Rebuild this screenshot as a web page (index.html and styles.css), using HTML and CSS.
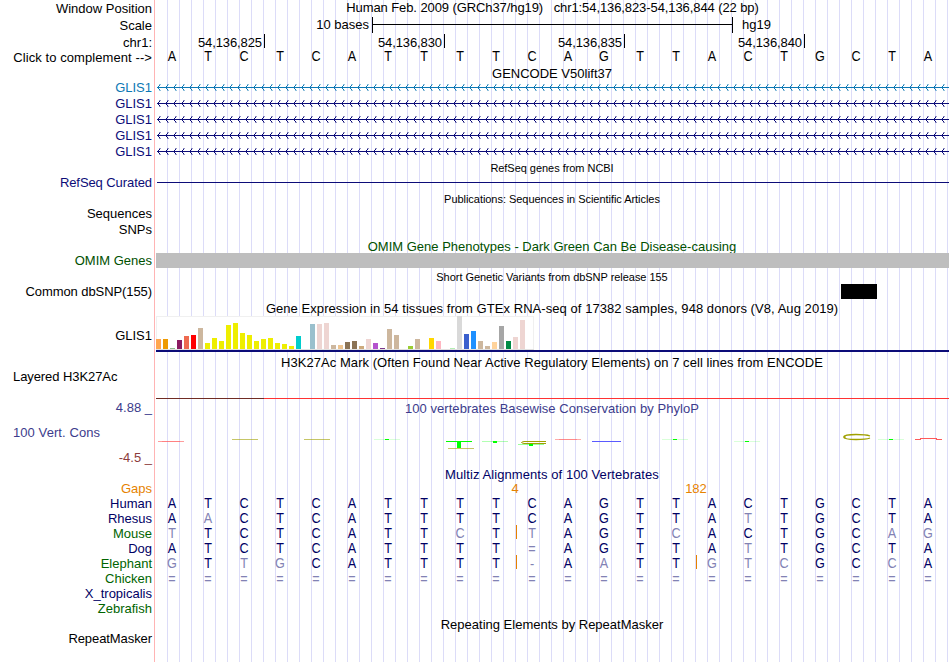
FILE: index.html
```html
<!DOCTYPE html>
<html lang="en">
<head>
	<meta charset="UTF-8">
	<title>Human chr1:54,136,823-54,136,844</title>
	<link rel="stylesheet" href="styles.css">
</head>
<body>
	<div class="browser">
		<div class="row h17">
			<div class="label">Window Position</div>
			<div class="data position">Human Feb. 2009 (GRCh37/hg19) &nbsp; chr1:54,136,823-54,136,844 (22 bp)</div>
		</div>
		<div class="row h17">
			<div class="label">Scale</div>
			<div class="data scale">
				<span class="scale_size">10 bases</span>
				<span class="scale_bar"></span>
				<span class="scale_db">hg19</span>
			</div>
		</div>
		<div class="row h15">
			<div class="label">chr1:</div>
			<div class="data coords">
				<span class="coord first">54,136,825</span>
				<span class="coord">54,136,830</span>
				<span class="coord">54,136,835</span>
				<span class="coord">54,136,840</span>
			</div>
		</div>
		<div class="row h15">
			<div class="label wide">Click to complement --&gt;</div>
			<div class="data bases" data-seq="ATCTCATTTTCAGTTACTGCTA"></div>
		</div>

		<div class="row h15"><div class="label"></div><div class="data title">GENCODE V50lift37</div></div>
		<div class="row h16 blue"><div class="label">GLIS1</div><div class="data gene"></div></div>
		<div class="row h16 navy"><div class="label">GLIS1</div><div class="data gene"></div></div>
		<div class="row h16 navy"><div class="label">GLIS1</div><div class="data gene"></div></div>
		<div class="row h16 navy"><div class="label">GLIS1</div><div class="data gene"></div></div>
		<div class="row h16 navy"><div class="label">GLIS1</div><div class="data gene"></div></div>

		<div class="row h15"><div class="label"></div><div class="data title small">RefSeq genes from NCBI</div></div>
		<div class="row h16 navy">
			<div class="label tight">RefSeq Curated</div>
			<div class="data"><div class="refseq_line"></div></div>
		</div>

		<div class="row h15"><div class="label"></div><div class="data title small">Publications: Sequences in Scientific Articles</div></div>
		<div class="row h16"><div class="label">Sequences</div></div>
		<div class="row h16"><div class="label">SNPs</div></div>

		<div class="row h15 green"><div class="label"></div><div class="data title omim_title">OMIM Gene Phenotypes - Dark Green Can Be Disease-causing</div></div>
		<div class="row h16 green">
			<div class="label">OMIM Genes</div>
			<div class="data"><div class="omim_bar"></div></div>
		</div>

		<div class="row h15"><div class="label"></div><div class="data title small">Short Genetic Variants from dbSNP release 155</div></div>
		<div class="row h16">
			<div class="label tight">Common dbSNP(155)</div>
			<div class="data"><div class="snp"></div></div>
		</div>

		<div class="row h15"><div class="label"></div><div class="data title gtex_title">Gene Expression in 54 tissues from GTEx RNA-seq of 17382 samples, 948 donors (V8, Aug 2019)</div></div>
		<div class="row h38">
			<div class="label gtex_label">GLIS1</div>
			<div class="data gtex">
				<div class="gtex_box" id="gtex"></div>
			</div>
		</div>

		<div class="row h16"><div class="label"></div><div class="data title h3k_title">H3K27Ac Mark (Often Found Near Active Regulatory Elements) on 7 cell lines from ENCODE</div></div>
		<div class="row h31">
			<div class="label left tight">Layered H3K27Ac</div>
			<div class="data h3k"></div>
		</div>

		<div class="row h15 slate"><div class="label">4.88 _</div><div class="data title phylop_title">100 vertebrates Basewise Conservation by PhyloP</div></div>
		<div class="row h51 slate">
			<div class="label cons">
				<span class="cons_name">100 Vert. Cons</span>
				<span class="cons_min">-4.5 _</span>
			</div>
			<div class="data">
				<svg class="phylop" width="793" height="51" viewBox="156 414 793 51">
					<!-- flattened letters, one per base -->
					<g fill="#ff5a5a">
						<rect x="158" y="441" width="26" height="1" opacity=".6"/>
						<rect x="162" y="441" width="18" height="1" opacity=".4"/>
						<rect x="555" y="439" width="26" height="1" opacity=".5"/>
						<rect x="559" y="439" width="18" height="1" opacity=".4"/>
						<rect x="915" y="439" width="6" height="1"/>
						<rect x="920" y="438" width="17" height="1"/>
						<rect x="936" y="439" width="6" height="1"/>
					</g>
					<g fill="#a0a000">
						<rect x="232" y="439" width="26" height="1" opacity=".6"/>
						<rect x="304" y="439" width="26" height="1" opacity=".6"/>
						<rect x="448" y="448" width="26" height="1" opacity=".6"/>
					</g>
					<g fill="none" stroke="#a0a000">
						<path d="M546 441.5H524Q519 442.5 524 443.5H546" stroke-width="1"/>
						<path d="M870 436Q866 434.5 856 434.5Q844 434.5 844 437Q844 439.5 856 439.5Q866 439.5 870 438" stroke-width="1.3"/>
						<path d="M844.5 435.8V438.2" stroke-width="2"/>
					</g>
					<g fill="#00ff00">
						<rect x="374" y="439" width="26" height="1" opacity=".15"/>
						<rect x="385" y="439" width="4" height="1"/>
						<rect x="446" y="441" width="26" height="1"/>
						<rect x="457" y="441" width="4" height="7"/>
						<rect x="482" y="441" width="26" height="1" opacity=".3"/>
						<rect x="493" y="441" width="4" height="2"/>
						<rect x="518" y="444" width="26" height="1" opacity=".4"/>
						<rect x="529" y="444" width="4" height="2"/>
						<rect x="662" y="439" width="26" height="1" opacity=".15"/>
						<rect x="673" y="439" width="4" height="1"/>
						<rect x="734" y="441" width="26" height="1" opacity=".15"/>
						<rect x="745" y="441" width="4" height="1"/>
						<rect x="878" y="439" width="26" height="1" opacity=".15"/>
						<rect x="889" y="439" width="4" height="1"/>
					</g>
					<rect x="592" y="441" width="29" height="1" fill="#5a5aff"/>
				</svg>
			</div>
		</div>

		<div class="row h15 align"><div class="label"></div><div class="data title multiz_title">Multiz Alignments of 100 Vertebrates</div></div>
		<div class="row h15 orange">
			<div class="label">Gaps</div>
			<div class="data gaps"><span class="gap gap4">4</span><span class="gap gap182">182</span></div>
		</div>
		<!-- lower case = base differs from human, | = insert before the next base -->
		<div class="row h15 align"><div class="label">Human</div><div class="data bases low" data-seq="ATCTCATTTTCAGTTACTGCTA"></div></div>
		<div class="row h15 align"><div class="label">Rhesus</div><div class="data bases low" data-seq="AaCTCATTTTCAGTTAtTGCTA"></div></div>
		<div class="row h15 align"><div class="label green">Mouse</div><div class="data bases low" data-seq="tTCTCATTcT|tAGTcACTGCag"></div></div>
		<div class="row h15 align"><div class="label">Dog</div><div class="data bases low" data-seq="ATCTCATTTT=AGTTAtTGCTA"></div></div>
		<div class="row h15 align"><div class="label green">Elephant</div><div class="data bases low" data-seq="gTtgCATTTT|-AaTT|gtcGCcA"></div></div>
		<div class="row h15 align"><div class="label green">Chicken</div><div class="data bases low" data-seq="======================"></div></div>
		<div class="row h15 align"><div class="label">X_tropicalis</div></div>
		<div class="row h15 align"><div class="label green">Zebrafish</div></div>

		<div class="row h15"><div class="label"></div><div class="data title repeat_title">Repeating Elements by RepeatMasker</div></div>
		<div class="row h32"><div class="label tight">RepeatMasker</div></div>
	</div>
<script>
window.onload = function (){
	var rows = document.querySelectorAll('.bases');
	for (var i = 0; i < rows.length; i++) {
		var seq = rows[i].getAttribute('data-seq');
		var html = '';
		var cls = '';
		for (var j = 0; j < seq.length; j++) {
			var c = seq[j];
			if (c == '|') {
				cls = ' insert';
				continue;
			}
			var up = c.toUpperCase();
			if (c == '=' || c == '-') {
				cls += ' diff missing';
			} else if (c != up) {
				cls += ' diff';
			}
			html += '<span class="base' + cls + '"><span class="letter">' + up + '</span></span>';
			cls = '';
		}
		rows[i].innerHTML = html;
	}

	// introns: line with strand arrows every 8px, the arrow ends are fainter
	var genes = document.querySelectorAll('.gene');
	var d = '';
	var ends = '';
	for (var x = 1; x < 790; x += 8) {
		d += 'M' + (x + 1) + ' 7h1v1h-1zm0 2h1v1h-1zm1 -3h1v1h-1zm0 4h1v1h-1z';
		ends += 'M' + (x + 2) + ' 5h1v1h-1zm0 6h1v1h-1zm1 -6h1v1h-1zm0 6h1v1h-1z';
	}
	for (var i = 0; i < genes.length; i++) {
		genes[i].innerHTML = '<svg class="intron" width="793" height="16"><rect x="1" y="8" width="792" height="1"/><path d="' + d + '"/><path class="ends" d="' + ends + '"/></svg>';
	}

	// GTEx tissues: [height, colour]
	var tissues = [
		[10,'#ffa54f'],[10,'#ee9a00'],[1,'#8fbc8f'],[9,'#8b1c62'],[13,'#ee6a50'],[14,'#ff0000'],
		[21,'#cdb79e'],[6,'#eeee00'],[11,'#eeee00'],[8,'#eeee00'],[24,'#eeee00'],[26,'#eeee00'],
		[16,'#eeee00'],[14,'#eeee00'],[8,'#eeee00'],[10,'#eeee00'],[11,'#eeee00'],[6,'#eeee00'],
		[5,'#eeee00'],[3,'#eeee00'],[13,'#00cdcd'],[0,'#ee82ee'],[25,'#9ac0cd'],[25,'#eed5d2'],
		[26,'#eed5d2'],[4,'#cdb79e'],[4,'#eec591'],[7,'#8b7355'],[8,'#8b7355'],[3,'#cdaa7d'],
		[10,'#eed5d2'],[6,'#b452cd'],[1,'#7a378b'],[20,'#cdb79e'],[14,'#cdb79e'],[0,'#cdb79e'],
		[3,'#9acd32'],[10,'#cdb79e'],[0,'#7a67ee'],[11,'#ffd700'],[8,'#ffb6c1'],[0,'#cd9b1d'],
		[1,'#b4eeb4'],[33,'#d9d9d9'],[15,'#3a5fcd'],[18,'#1e90ff'],[8,'#cdb79e'],[3,'#cdb79e'],
		[7,'#ffd39b'],[23,'#a6a6a6'],[8,'#008b45'],[12,'#eed5d2'],[29,'#eed5d2'],[0,'#ff00ff']];
	var bars = '';
	for (var i = 0; i < tissues.length; i++) {
		bars += '<span class="tissue" style="height:' + tissues[i][0] + 'px;background:' + tissues[i][1] + '"></span>';
	}
	document.getElementById('gtex').innerHTML = bars;
}
</script>
</body>
</html>
```
FILE: styles.css
```css
body{
	margin: 0;
	background: #fff;
	font-family: "Liberation Sans", Arial, sans-serif;
	font-size: 13px;
	line-height: 15px;
	color: #000;
}
.browser{
	width: 949px;
	height: 662px;
	overflow: hidden;
	background: repeating-linear-gradient(to right, transparent 0, transparent 11px, #dcdcf8 11px, #dcdcf8 12px) 156px 0 no-repeat;
}
.row{
	display: flex;
}
.h15{ height: 15px; }
.h16{ height: 16px; }
.h17{ height: 17px; }
.h31{ height: 31px; }
.h32{ height: 32px; }
.h38{ height: 38px; }
.h51{ height: 51px; }

.blue{ color: #0c78b4; }
.navy{ color: #0c0c78; }
.green{ color: #005000; }
.slate{ color: #3c3c8c; }
.align{ color: #000064; }
.orange{ color: #e68200; }
.label.green{ color: #006400; }

.label{
	box-sizing: border-box;
	flex: none;
	width: 155px;
	padding: 1px 2px 0 13px;
	border-right: 1px solid #ffb4b4;
	text-align: right;
	white-space: nowrap;
}
.label.left{
	text-align: left;
}
.label.tight{
	letter-spacing: -0.08px;
}
.label.wide{
	padding-left: 0;
	letter-spacing: 0.08px;
}
.data{
	box-sizing: border-box;
	flex: none;
	width: 793px;
	margin-left: 1px;
	white-space: nowrap;
}
.position{
	text-align: center;
	letter-spacing: -0.09px;
}
.title{
	padding: 2px 1px 0 0;
	text-align: center;
}
.small{
	font-size: 11px;
	letter-spacing: -0.04px;
}
.gtex_title{
	letter-spacing: 0.055px;
}
.h3k_title{
	padding-top: 3px;
	letter-spacing: 0.05px;
}
.phylop_title{
	letter-spacing: 0.04px;
}
.multiz_title{
	letter-spacing: 0.08px;
}

.scale{
	display: flex;
}
.scale_size{
	width: 213px;
	text-align: right;
}
.scale_bar{
	box-sizing: border-box;
	width: 361px;
	height: 16px;
	margin: 0 9px 0 3px;
	border: solid #000;
	border-width: 0 1px;
	background: linear-gradient(#000, #000) 0 7px / 100% 1px no-repeat;
}
.coords{
	display: flex;
}
.coord{
	box-sizing: border-box;
	width: 180px;
	height: 14px;
	padding: 1px 2px 0 0;
	border-right: 1px solid #000;
	text-align: right;
	letter-spacing: -0.1px;
}
.coord.first{
	width: 109px;
}

.bases{
	display: flex;
	margin-left: -1px;
}
.base{
	position: relative;
	flex: none;
	width: 36px;
	text-align: center;
}
.letter{
	display: block;
	font-size: 14px;
	transform: scaleX(0.9);
}
.low{
	padding-top: 1px;
}
.diff{
	color: #8282b4;
}
.missing .letter{
	padding-top: 1px;
}
/* orange tick between two bases */
.insert::before{
	content: "";
	position: absolute;
	left: 2px;
	top: -1px;
	width: 1px;
	height: 14px;
	background: #e68200;
}
.gaps{
	display: flex;
	padding-top: 1px;
}
.gap{
	width: 40px;
	text-align: center;
}
.gap4{
	margin-left: 339px;
}
.gap182{
	margin-left: 141px;
}

.intron{
	display: block;
	fill: currentColor;
}
.intron .ends{
	opacity: 0.45;
}
.refseq_line{
	height: 1px;
	margin: 8px 0 0 1px;
	background: #0c0c78;
}
.omim_bar{
	height: 15px;
	margin-top: 1px;
	background: #bebebe;
}
.snp{
	width: 36px;
	height: 15px;
	margin: 1px 0 0 685px;
	background: #000;
}

.gtex{
	padding-top: 2px;
	border-bottom: 2px solid #0c0c78;
}
.gtex_label{
	padding-top: 14px;
}
.gtex_box{
	box-sizing: border-box;
	display: flex;
	align-items: flex-end;
	gap: 2px;
	width: 378px;
	height: 34px;
	border-bottom: 1px solid #e0e0e0;
	background: #fff;
	box-shadow: inset 1px 1px #f0f0f0, inset -1px 0 #f0f0f0;
}
.tissue{
	flex: none;
	width: 5px;
}
.h3k{
	height: 31px;
	background: linear-gradient(to right, #702c24 108px, #ff3232 108px) 0 30px / 100% 1px no-repeat;
}

.cons{
	display: flex;
	flex-direction: column;
	padding-top: 11px;
	text-align: left;
}
.cons_name{
	letter-spacing: 0.08px;
}
.cons_min{
	margin-top: 10px;
	text-align: right;
	color: #8c3c3c;
}
.phylop{
	display: block;
}
```
